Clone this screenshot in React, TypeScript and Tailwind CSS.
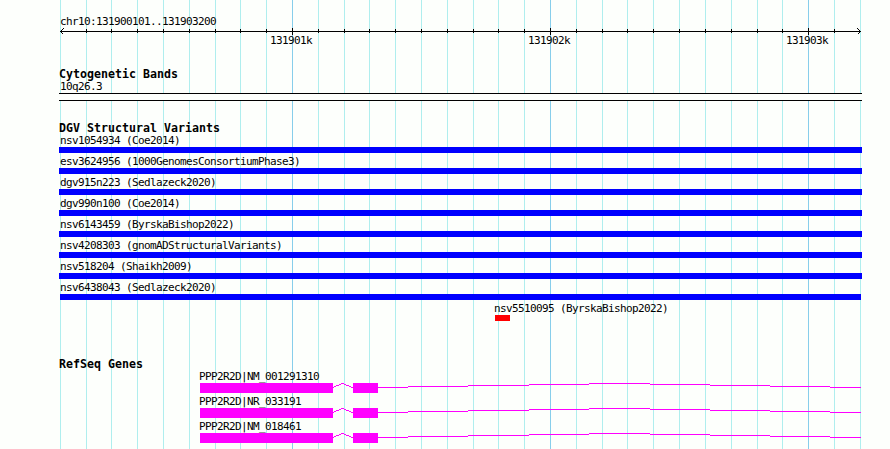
import React from 'react';
import { clsx } from 'clsx';

const GRID_LINES = [
  60, 86, 111, 137, 163, 189, 215, 240, 266, 292, 318, 344, 369, 395, 421, 447, 473, 498, 524, 550, 576, 602, 627,
  653, 679, 705, 731, 757, 782, 808, 834, 860,
];

const MAJOR_TICKS = [
  { x: 292, label: '131901k' },
  { x: 550, label: '131902k' },
  { x: 808, label: '131903k' },
];

const isMajor = (x: number) => MAJOR_TICKS.some((tick) => tick.x === x);

interface Variant {
  name: string;
  start: number;
  end: number;
  loss?: boolean;
}

const variants: Variant[] = [
  { name: 'nsv1054934 (Coe2014)', start: 59, end: 862 },
  { name: 'esv3624956 (1000GenomesConsortiumPhase3)', start: 59, end: 862 },
  { name: 'dgv915n223 (Sedlazeck2020)', start: 59, end: 862 },
  { name: 'dgv990n100 (Coe2014)', start: 59, end: 862 },
  { name: 'nsv6143459 (ByrskaBishop2022)', start: 59, end: 862 },
  { name: 'nsv4208303 (gnomADStructuralVariants)', start: 59, end: 862 },
  { name: 'nsv518204 (Shaikh2009)', start: 59, end: 862 },
  { name: 'nsv6438043 (Sedlazeck2020)', start: 60, end: 861 },
  { name: 'nsv5510095 (ByrskaBishop2022)', start: 495, end: 510, loss: true },
];

const genes = ['PPP2R2D|NM_001291310', 'PPP2R2D|NR_033191', 'PPP2R2D|NM_018461'];

function GridLines() {
  return (
    <svg className="absolute inset-0" width="890" height="449" shapeRendering="crispEdges">
      {GRID_LINES.map((x) => (
        <rect key={x} x={x} y={0} width={1} height={449} fill={isMajor(x) ? '#87ceeb' : '#afeeee'} />
      ))}
    </svg>
  );
}

function Ruler() {
  return (
    <svg className="block h-[7px] overflow-visible" width="890" shapeRendering="crispEdges">
      <rect x={60} y={4} width={801} height={1} />
      {GRID_LINES.slice(1, -1).map((x) => (
        <rect key={x} x={x} y={isMajor(x) ? 1 : 2} width={1} height={isMajor(x) ? 7 : 4} />
      ))}
      <path d="M63.5 1.5L60.5 4.5L63.5 7.5M857.5 1.5L860.5 4.5L857.5 7.5" fill="none" stroke="black" />
    </svg>
  );
}

function TrackTitle({ children }: { children: React.ReactNode }) {
  return <h2 className="ml-[59px] h-3 text-[11.6px] leading-3 font-bold tracking-[0.016px]">{children}</h2>;
}

function VariantRow({ variant }: { variant: Variant }) {
  return (
    <div className="h-[21px]">
      <p className="h-[13px]" style={{ marginLeft: Math.max(variant.start - 1, 60) }}>
        {variant.name}
      </p>
      <div
        className={clsx('h-1.5', variant.loss ? 'bg-[#ff0000]' : 'bg-[#0000ff]')}
        style={{ marginLeft: variant.start, width: variant.end - variant.start }}
      />
    </div>
  );
}

function GeneRow({ name }: { name: string }) {
  return (
    <div className="h-[25px]">
      <p className="relative z-10 ml-[199px] h-[13px]">{name}</p>
      <svg className="block" width="890" height="10" shapeRendering="crispEdges">
        <g fill="#ff00ff">
          <rect x={200} y={0} width={133} height={10} />
          <rect x={353} y={0} width={25} height={10} />
        </g>
        {/* introns */}
        <g fill="none" stroke="#ff00ff">
          <path d="M333 4.5H334M334 3.5H336M336 2.5H339M339 1.5H341M341 0.5H344M344 1.5H346M346 2.5H349M349 3.5H351M351 4.5H353" />
          <path d="M378 4.5H408M408 3.5H468M468 2.5H529M529 1.5H589M589 0.5H650M650 1.5H710M710 2.5H770M770 3.5H830M830 4.5H861" />
        </g>
      </svg>
    </div>
  );
}

export default function App() {
  return (
    <div className="relative h-[449px] w-[890px] overflow-hidden bg-[#fdfffc] font-['DejaVu_Sans_Mono',monospace] text-[11px] leading-[14px] tracking-[-0.622px] whitespace-nowrap text-black">
      <GridLines />
      <main className="relative pt-[15px]">
        <section className="h-[53px]">
          <p className="ml-[60px] h-3">chr10:131900101..131903200</p>
          <Ruler />
          <div className="flex gap-[216px] pl-[270px]">
            {MAJOR_TICKS.map((tick) => (
              <span key={tick.x} className="w-[42px]">{tick.label}</span>
            ))}
          </div>
        </section>

        <section className="h-[54px]">
          <TrackTitle>Cytogenetic Bands</TrackTitle>
          <p className="ml-[60px] h-[13px]">10q26.3</p>
          <div className="ml-[59px] h-2 w-[803px] border-y border-black bg-[#fdfffc]" />
        </section>

        <section className="h-[236px]">
          <TrackTitle>DGV Structural Variants</TrackTitle>
          {variants.map((variant) => (
            <VariantRow key={variant.name} variant={variant} />
          ))}
        </section>

        <section>
          <TrackTitle>RefSeq Genes</TrackTitle>
          {genes.map((name) => (
            <GeneRow key={name} name={name} />
          ))}
        </section>
      </main>
    </div>
  );
}
